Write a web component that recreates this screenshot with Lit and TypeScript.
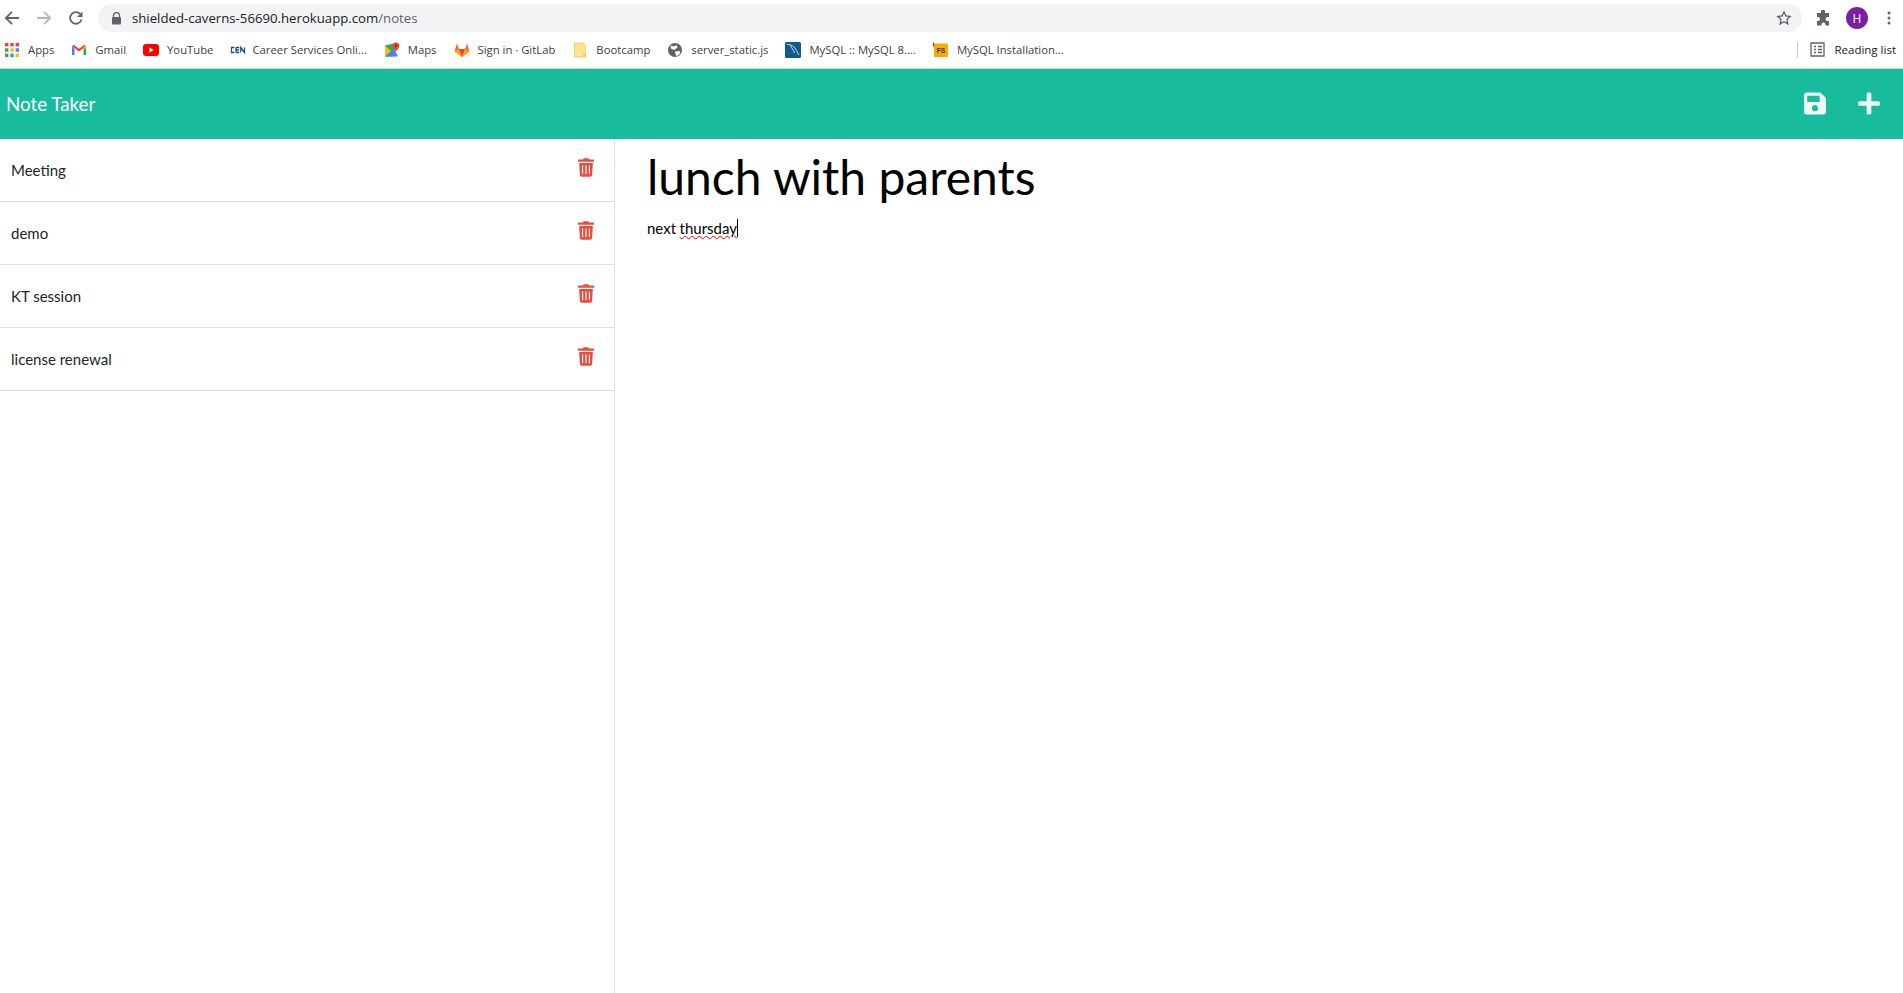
import {LitElement, css, html, svg} from 'lit';
import {customElement} from 'lit/decorators.js';

const bookmarks = [
  {label: 'Career Services Onli...', icon: 'cen'},
  {label: 'Maps', icon: 'maps'},
  {label: 'Sign in · GitLab', icon: 'gitlab'},
  {label: 'Bootcamp', icon: 'folder'},
  {label: 'server_static.js', icon: 'globe'},
  {label: 'MySQL :: MySQL 8....', icon: 'mysql'},
  {label: 'MySQL Installation...', icon: 'fs'},
];

const notes = ['Meeting', 'demo', 'KT session', 'license renewal'];

const icons: Record<string, unknown> = {
  apps: svg`<svg width="16" height="16" viewBox="0 0 16 16">
    <rect x="1" y="1" width="3.400" height="3.400" fill="#ea4335"/><rect x="6.300" y="1" width="3.400" height="3.400" fill="#ea4335"/><rect x="11.600" y="1" width="3.400" height="3.400" fill="#ea4335"/>
    <rect x="1" y="6.300" width="3.400" height="3.400" fill="#34a853"/><rect x="6.300" y="6.300" width="3.400" height="3.400" fill="#fbbc04"/><rect x="11.600" y="6.300" width="3.400" height="3.400" fill="#4285f4"/>
    <rect x="1" y="11.600" width="3.400" height="3.400" fill="#34a853"/><rect x="6.300" y="11.600" width="3.400" height="3.400" fill="#4285f4"/><rect x="11.600" y="11.600" width="3.400" height="3.400" fill="#fbbc04"/>
  </svg>`,
  gmail: svg`<svg width="16" height="16" viewBox="0 0 16 16">
    <path d="M1 4v9h2.500V7z" fill="#4285f4"/><path d="M12.500 7v6H15V4z" fill="#34a853"/>
    <path d="M1 4.200 8 9.500l7-5.300-1.600-1.400L8 6.800 2.600 2.800z" fill="#ea4335"/>
    <path d="M12.500 5v2.500L15 5.500V3.800z" fill="#fbbc04"/>
  </svg>`,
  youtube: svg`<svg width="16" height="16" viewBox="0 0 16 16">
    <rect x="0" y="2" width="16" height="12" rx="3" fill="#f00"/><path d="M6.300 5.400v5.200L10.800 8z" fill="#fff"/>
  </svg>`,
  cen: svg`<svg class="tight" width="16" height="16" viewBox="0 0 16 16">
    <path d="M4.500 5.500H1.500v5h3M6 5.500h3.300M6 8h3M6 10.500h3.300M6 5.500v5M10.800 10.500v-5l3.700 5v-5" fill="none" stroke="#1f4e79" stroke-width="1.300"/>
  </svg>`,
  maps: svg`<svg width="16" height="16" viewBox="0 0 16 16">
    <path d="M1 3.500 10 1.500V14.500H1z" fill="#34a853"/><path d="M1 14.500 10 6.500l4 8z" fill="#4285f4"/><path d="M1 3.500 7 9 1 14.500z" fill="#fbbc04"/>
    <path d="M12 .5a3.300 3.300 0 0 1 3.300 3.300C15.300 6 12 9.500 12 9.500S8.700 6 8.700 3.800A3.300 3.300 0 0 1 12 .5z" fill="#ea4335"/><circle cx="12" cy="3.800" r="1.100" fill="#8c1c13"/>
  </svg>`,
  gitlab: svg`<svg width="16" height="16" viewBox="0 0 16 16">
    <path d="M8 15 .5 9.500 2.800 1.500 5 7h6l2.200-5.500 2.300 8z" fill="#fc6d26"/><path d="M8 15 5 7h6z" fill="#e24329"/><path d="M.5 9.500 5 7l3 8zM15.500 9.500 11 7l-3 8z" fill="#fca326"/>
  </svg>`,
  folder: svg`<svg width="16" height="16" viewBox="0 0 16 16">
    <path d="M2.500 1h8.500l2.500 2.500V15h-11z" fill="#fde293" stroke="#f2c94c" stroke-width=".8"/><path d="M11 12.500h2.500V15H11z" fill="#f2c94c"/>
  </svg>`,
  globe: svg`<svg width="16" height="16" viewBox="0 0 16 16">
    <circle cx="8" cy="8" r="7" fill="#5f6368"/><path d="M3.500 3.500 7.500 4.500 9.500 3 10.500 5.500 7 8 4 6.500zM8 9.500l4.500-.5.800 2.500L9.500 14.500 8.500 12z" fill="#fff"/>
  </svg>`,
  mysql: svg`<svg width="16" height="16" viewBox="0 0 16 16">
    <rect x="0" y="0" width="16" height="16" rx="1.500" fill="#0f5a87"/><path d="M2 2.500c4-.5 8 2.500 9.500 6 .6 1.500 1.500 3 2.500 4.500M5.500 3.500c1 3 3 4 4 7.500" fill="none" stroke="#d6e6ef" stroke-width="1"/>
  </svg>`,
  fs: svg`<svg width="16" height="16" viewBox="0 0 16 16">
    <rect x="1" y="1.500" width="14" height="13.500" fill="#f9ab00"/><path d="M.5 .5v4" stroke="#5f4a1a" stroke-width="1"/><text x="8" y="11" text-anchor="middle" font-size="6.500" font-weight="700" font-family="Liberation Sans, sans-serif" fill="#333">FS</text>
  </svg>`,
};

@customElement('app-root')
export class AppRoot extends LitElement {
  static get styles() {
    return [
      css`
        :host {
          display: flex;
          flex-direction: column;
          height: 993px;
          overflow: hidden;
          background: #fff;
          font-family: Lato, sans-serif;
        }
        .toolbar {
          display: flex;
          align-items: center;
          height: 28px;
          margin: 4px 0 3px;
          flex: none;
        }
        .nav-icon {
          display: block;
          flex: none;
        }
        .nav-group {
          display: flex;
          align-items: center;
          gap: 16px;
          padding-left: 4px;
          width: 98px;
          box-sizing: border-box;
        }
        .omnibox {
          display: flex;
          align-items: center;
          width: 1704px;
          height: 28px;
          background: #f1f3f4;
          border-radius: 14px;
          box-sizing: border-box;
          padding: 0 10px 0 13px;
          font: 13.200px 'Open Sans', sans-serif;
          color: #202124;
        }
        .lock {
          margin-right: 10px;
        }
        .url-path {
          color: #5f6368;
        }
        .star {
          margin-left: auto;
        }
        .right-group {
          display: flex;
          align-items: center;
          padding-left: 13px;
          gap: 15px;
        }
        .avatar {
          width: 22px;
          height: 22px;
          border-radius: 50%;
          background: #7b1fa2;
          color: #fff;
          font: 12px 'Open Sans', sans-serif;
          display: flex;
          align-items: center;
          justify-content: center;
        }
        .bookmarks {
          display: flex;
          align-items: center;
          height: 34px;
          flex: none;
          padding: 0 0 4px 4px;
          box-sizing: border-box;
          font: 11.300px 'Open Sans', sans-serif;
          color: #3c4043;
          border-bottom: 1px solid #d4d4d4;
        }
        .bookmark {
          display: flex;
          align-items: center;
          gap: 8px;
          white-space: nowrap;
          margin-right: 17px;
        }
        .tight {
          margin-right: -2px;
        }
        .reading {
          margin-left: auto;
          display: flex;
          align-items: center;
          gap: 9px;
          padding: 0 7px 0 12px;
          border-left: 1px solid #ccc;
          height: 16px;
          font-size: 11.500px;
          color: #202124;
        }
        .navbar {
          display: flex;
          align-items: center;
          justify-content: space-between;
          height: 70px;
          flex: none;
          background: #18bc9c;
          padding: 0 23px 2px 6px;
          box-sizing: border-box;
        }
        .brand {
          color: #fff;
          font-size: 18.750px;
        }
        .actions {
          display: flex;
          align-items: center;
          gap: 32px;
        }
        .main {
          display: flex;
          flex: 1;
          min-height: 0;
        }
        .sidebar {
          width: 615px;
          flex: none;
          box-sizing: border-box;
          border-right: 1px solid #dfdfdf;
        }
        .note-row {
          display: flex;
          align-items: center;
          justify-content: space-between;
          height: 63px;
          box-sizing: border-box;
          padding: 0 20px 1px 11px;
          border-bottom: 1px solid #dfdfdf;
          font-size: 15px;
          color: #212529;
        }
        .note-row svg {
          margin-top: -5px;
        }
        .editor {
          flex: 1;
          padding: 0 32px;
          color: #000;
        }
        .note-title {
          font-size: 48px;
          line-height: 58px;
          margin-top: 9px;
        }
        .note-text {
          font-size: 15px;
          line-height: 20px;
          margin-top: 12px;
          display: flex;
          align-items: center;
        }
        .misspelled {
          text-decoration: underline wavy #e00;
          text-decoration-thickness: 1px;
          text-underline-offset: 1px;
          margin-left: 3.500px;
        }
        .caret {
          display: inline-block;
          width: 1px;
          height: 18px;
          background: #000;
        }
      `,
    ];
  }

  trashIcon() {
    return html`<svg width="16" height="19" viewBox="0 0 448 512" fill="#e74c3c">
      <path d="M432 32H312l-9.400-18.700A24 24 0 0 0 281.100 0H166.800a23.700 23.700 0 0 0-21.400 13.300L136 32H16A16 16 0 0 0 0 48v32a16 16 0 0 0 16 16h416a16 16 0 0 0 16-16V48a16 16 0 0 0-16-16zM32 128l21.200 339a48 48 0 0 0 47.900 45h245.800a48 48 0 0 0 47.900-45L416 128zM304 208a16 16 0 0 1 32 0v224a16 16 0 0 1-32 0zm-96 0a16 16 0 0 1 32 0v224a16 16 0 0 1-32 0zm-96 0a16 16 0 0 1 32 0v224a16 16 0 0 1-32 0z" fill-rule="evenodd"/>
    </svg>`;
  }

  render() {
    return html`
      <div class="toolbar">
        <div class="nav-group">
          <svg class="nav-icon" width="16" height="16" viewBox="0 0 16 16"><path d="M15 8H2.500M8 1.800 1.800 8 8 14.200" fill="none" stroke="#5f6368" stroke-width="1.800"/></svg>
          <svg class="nav-icon" width="16" height="16" viewBox="0 0 16 16"><path d="M1 8h12.500M8 1.800 14.200 8 8 14.200" fill="none" stroke="#b4b7bb" stroke-width="1.800"/></svg>
          <svg class="nav-icon" width="16" height="16" viewBox="0 0 16 16"><path d="M13.500 9.500A5.800 5.800 0 1 1 12.200 4" fill="none" stroke="#5f6368" stroke-width="1.800"/><path d="M14.500 1.500V7H9z" fill="#5f6368"/></svg>
        </div>
        <div class="omnibox">
          <svg class="lock" width="11" height="13" viewBox="0 0 11 13"><path d="M2.500 5V3.500a3 3 0 0 1 6 0V5" fill="none" stroke="#5f6368" stroke-width="1.300"/><rect x="1" y="5" width="9" height="7.500" rx="1" fill="#5f6368"/></svg>
          <span>shielded-caverns-56690.herokuapp.com<span class="url-path">/notes</span></span>
          <svg class="star" width="16" height="16" viewBox="0 0 24 24"><path d="M12 3l2.800 6 6.500.8-4.800 4.500 1.300 6.500L12 17.500 6.200 20.800l1.300-6.500L2.700 9.800 9.200 9z" fill="none" stroke="#5f6368" stroke-width="2"/></svg>
        </div>
        <div class="right-group">
          <svg width="16" height="16" viewBox="0 0 16 16"><path d="M6 1a2 2 0 0 1 4 0v1.500h4V6.500h-1.500a2 2 0 0 0 0 4H14V15h-3.500v-1a2 2 0 0 0-4 0v1H2V10.500h1a2 2 0 0 0 0-4H2V2.500h4z" fill="#5f6368" transform="translate(0 .5)"/></svg>
          <div class="avatar">H</div>
          <svg width="12" height="16" viewBox="0 0 12 16" fill="#5f6368"><circle cx="6" cy="3" r="1.500"/><circle cx="6" cy="8" r="1.500"/><circle cx="6" cy="13" r="1.500"/></svg>
        </div>
      </div>
      <div class="bookmarks">
        <div class="bookmark">${icons.apps}Apps</div>
        <div class="bookmark">${icons.gmail}Gmail</div>
        <div class="bookmark">${icons.youtube}YouTube</div>
        ${bookmarks.map((b) => html`<div class="bookmark">${icons[b.icon]}${b.label}</div>`)}
        <div class="reading">
          <svg width="15" height="15" viewBox="0 0 15 15"><path d="M1 1h13v13H1zM4 4.500h2M8 4.500h4M4 7.500h2M8 7.500h4M4 10.500h2M8 10.500h4" fill="none" stroke="#5f6368" stroke-width="1.300"/></svg>
          Reading list
        </div>
      </div>
      <div class="navbar">
        <div class="brand">Note Taker</div>
        <div class="actions">
          <svg width="22" height="25" viewBox="0 0 448 512" fill="#f0f9f7"><path d="M433.900 129.900l-83.900-83.900A48 48 0 0 0 316.100 32H48C21.500 32 0 53.500 0 80v352c0 26.500 21.500 48 48 48h352c26.500 0 48-21.500 48-48V163.900a48 48 0 0 0-14.100-34zM224 416c-35.300 0-64-28.700-64-64s28.700-64 64-64 64 28.700 64 64-28.700 64-64 64zm96-304.500V212c0 6.600-5.400 12-12 12H76c-6.600 0-12-5.400-12-12V108c0-6.600 5.400-12 12-12h228.500c3.200 0 6.200 1.300 8.500 3.500l3.500 3.500c2.200 2.200 3.500 5.300 3.500 8.500z"/></svg>
          <svg width="22" height="25" viewBox="0 0 448 512" fill="#f0f9f7"><path d="M416 208H272V64c0-17.700-14.300-32-32-32h-32c-17.700 0-32 14.300-32 32v144H32c-17.700 0-32 14.300-32 32v32c0 17.700 14.300 32 32 32h144v144c0 17.700 14.300 32 32 32h32c17.700 0 32-14.300 32-32V304h144c17.700 0 32-14.300 32-32v-32c0-17.700-14.300-32-32-32z"/></svg>
        </div>
      </div>
      <div class="main">
        <div class="sidebar">
          ${notes.map((n) => html`<div class="note-row"><span>${n}</span>${this.trashIcon()}</div>`)}
        </div>
        <div class="editor">
          <div class="note-title">lunch with parents</div>
          <div class="note-text">next <span class="misspelled">thursday</span><span class="caret"></span></div>
        </div>
      </div>
    `;
  }
}
